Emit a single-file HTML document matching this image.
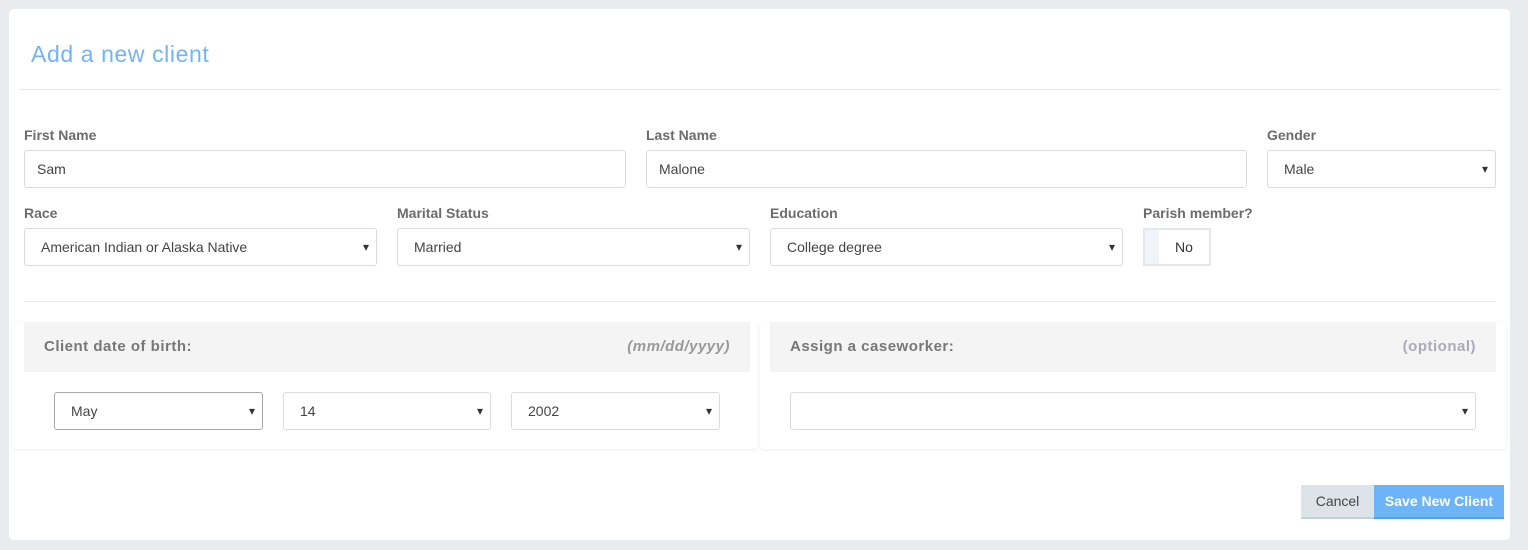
<!DOCTYPE html>
<html><head><style>
*{box-sizing:border-box;margin:0;padding:0}
body{width:1528px;height:550px;background:#e9ecef;font-family:"Liberation Sans",sans-serif;position:relative;overflow:hidden}
.card{position:absolute;left:9px;top:9px;width:1501px;height:531px;background:#fff;border-radius:5px}
.a{position:absolute}
h1{position:absolute;left:31px;top:41px;font-weight:normal;font-size:23px;color:#74b3f5;letter-spacing:.6px}
.lbl{position:absolute;font-size:14px;font-weight:bold;color:#6c6c6c}
.inp{position:absolute;height:38px;border:1px solid #dcdcdc;border-radius:3px;background:#fff;font-size:14px;color:#444;padding:0 0 0 12px;line-height:36px}
.sel{padding-left:16px}
.sel:after{content:"▾";position:absolute;right:7px;top:0;font-size:12px;color:#333}
.hr{position:absolute;height:1px;background:#e8e8e8}
.panel{position:absolute;background:#fff;border-radius:4px;box-shadow:0 1px 3px rgba(0,0,0,.08)}
.ph{position:absolute;height:50px;background:#f4f4f4;font-size:15px;font-weight:bold;color:#777;line-height:50px;letter-spacing:.5px}
</style></head><body>
<div class="card"></div>
<h1>Add a new client</h1>
<div class="hr" style="left:19px;top:89px;width:1482px"></div>

<div class="lbl" style="left:24px;top:127px">First Name</div>
<div class="inp" style="left:24px;top:150px;width:602px">Sam</div>
<div class="lbl" style="left:646px;top:127px">Last Name</div>
<div class="inp" style="left:646px;top:150px;width:601px">Malone</div>
<div class="lbl" style="left:1267px;top:127px">Gender</div>
<div class="inp sel" style="left:1267px;top:150px;width:229px">Male</div>

<div class="lbl" style="left:24px;top:205px">Race</div>
<div class="inp sel" style="left:24px;top:228px;width:353px">American Indian or Alaska Native</div>
<div class="lbl" style="left:397px;top:205px">Marital Status</div>
<div class="inp sel" style="left:397px;top:228px;width:353px">Married</div>
<div class="lbl" style="left:770px;top:205px">Education</div>
<div class="inp sel" style="left:770px;top:228px;width:353px">College degree</div>
<div class="lbl" style="left:1143px;top:205px">Parish member?</div>
<div class="a" style="left:1143px;top:228px;width:68px;height:38px;border:2px solid #e3e8ed;background:#fff">
<div class="a" style="left:0;top:0;width:14px;height:34px;background:#f0f4f8"></div>
<div class="a" style="left:14px;top:0;width:50px;height:34px;line-height:34px;text-align:center;font-size:14px;color:#333">No</div></div>

<div class="hr" style="left:24px;top:301px;width:1472px"></div>

<div class="panel" style="left:12px;top:322px;width:745px;height:127px"></div>
<div class="ph" style="left:24px;top:322px;width:726px;padding-left:20px">Client date of birth:<span style="position:absolute;right:20px;font-style:italic;color:#999">(mm/dd/yyyy)</span></div>
<div class="inp sel" style="left:54px;top:392px;width:209px;border-color:#aaa">May</div>
<div class="inp sel" style="left:283px;top:392px;width:208px">14</div>
<div class="inp sel" style="left:511px;top:392px;width:209px">2002</div>

<div class="panel" style="left:760px;top:322px;width:746px;height:127px"></div>
<div class="ph" style="left:770px;top:322px;width:726px;padding-left:20px">Assign a caseworker:<span style="position:absolute;right:20px;color:#aab">(optional)</span></div>
<div class="inp sel" style="left:790px;top:392px;width:686px"></div>

<div class="a" style="left:1301px;top:485px;width:73px;height:34px;background:#dce4ea;border-bottom:2px solid #c2d0dc;color:#444;font-size:14px;text-align:center;line-height:33px">Cancel</div>
<div class="a" style="left:1374px;top:485px;width:130px;height:34px;background:#6db3f7;border-bottom:2px solid #4ea0f0;color:#fff;font-size:14px;font-weight:bold;text-align:center;line-height:33px">Save New Client</div>
</body></html>
